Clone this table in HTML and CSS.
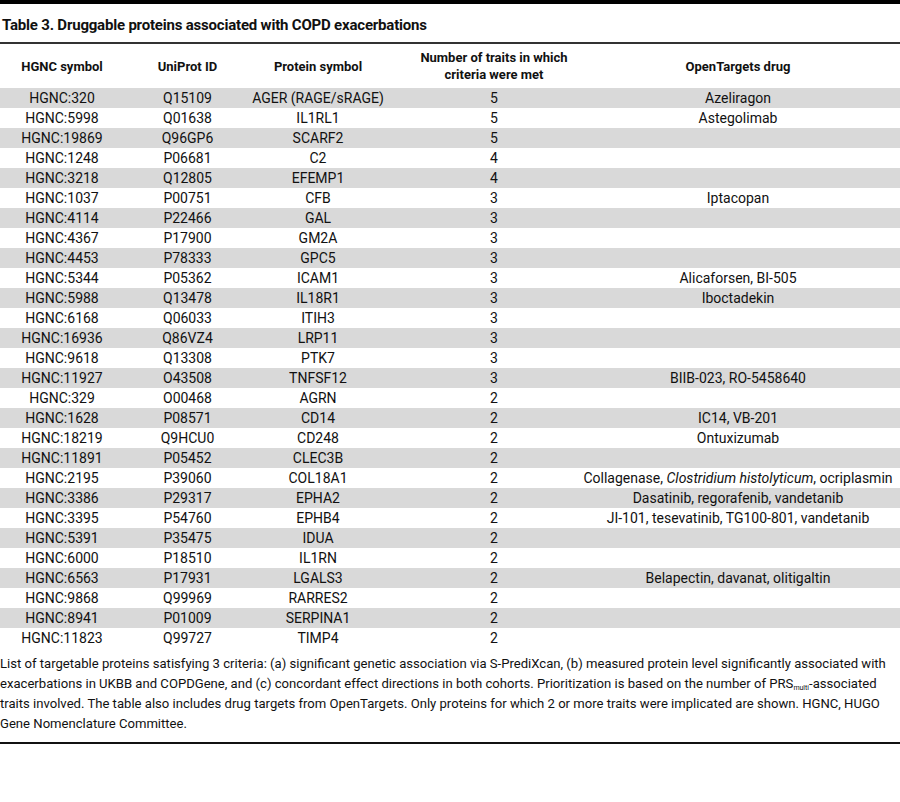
FILE: index.html
```html
<!DOCTYPE html>
<html lang="en">
  <head>
    <meta charset="UTF-8" />
    <meta name="viewport" content="width=device-width, initial-scale=1.0" />
    <title>Table 3</title>
    <link rel="stylesheet" href="styles.css">
  </head>
  <body>
    <div class="table-wrap">
      <h1 class="caption">Table 3. Druggable proteins associated with COPD exacerbations</h1>

      <table class="data">
        <thead>
          <tr>
            <th class="c1">HGNC symbol</th>
            <th class="c2">UniProt ID</th>
            <th class="c3">Protein symbol</th>
            <th class="c4">Number of traits in which<br>criteria were met</th>
            <th class="c5">OpenTargets drug</th>
          </tr>
        </thead>
        <tbody>
          <tr><td>HGNC:320</td><td>Q15109</td><td>AGER (RAGE/sRAGE)</td><td>5</td><td>Azeliragon</td></tr>
          <tr><td>HGNC:5998</td><td>Q01638</td><td>IL1RL1</td><td>5</td><td>Astegolimab</td></tr>
          <tr><td>HGNC:19869</td><td>Q96GP6</td><td>SCARF2</td><td>5</td><td></td></tr>
          <tr><td>HGNC:1248</td><td>P06681</td><td>C2</td><td>4</td><td></td></tr>
          <tr><td>HGNC:3218</td><td>Q12805</td><td>EFEMP1</td><td>4</td><td></td></tr>
          <tr><td>HGNC:1037</td><td>P00751</td><td>CFB</td><td>3</td><td>Iptacopan</td></tr>
          <tr><td>HGNC:4114</td><td>P22466</td><td>GAL</td><td>3</td><td></td></tr>
          <tr><td>HGNC:4367</td><td>P17900</td><td>GM2A</td><td>3</td><td></td></tr>
          <tr><td>HGNC:4453</td><td>P78333</td><td>GPC5</td><td>3</td><td></td></tr>
          <tr><td>HGNC:5344</td><td>P05362</td><td>ICAM1</td><td>3</td><td>Alicaforsen, BI-505</td></tr>
          <tr><td>HGNC:5988</td><td>Q13478</td><td>IL18R1</td><td>3</td><td>Iboctadekin</td></tr>
          <tr><td>HGNC:6168</td><td>Q06033</td><td>ITIH3</td><td>3</td><td></td></tr>
          <tr><td>HGNC:16936</td><td>Q86VZ4</td><td>LRP11</td><td>3</td><td></td></tr>
          <tr><td>HGNC:9618</td><td>Q13308</td><td>PTK7</td><td>3</td><td></td></tr>
          <tr><td>HGNC:11927</td><td>O43508</td><td>TNFSF12</td><td>3</td><td>BIIB-023, RO-5458640</td></tr>
          <tr><td>HGNC:329</td><td>O00468</td><td>AGRN</td><td>2</td><td></td></tr>
          <tr><td>HGNC:1628</td><td>P08571</td><td>CD14</td><td>2</td><td>IC14, VB-201</td></tr>
          <tr><td>HGNC:18219</td><td>Q9HCU0</td><td>CD248</td><td>2</td><td>Ontuxizumab</td></tr>
          <tr><td>HGNC:11891</td><td>P05452</td><td>CLEC3B</td><td>2</td><td></td></tr>
          <tr><td>HGNC:2195</td><td>P39060</td><td>COL18A1</td><td>2</td><td><span class="wide">Collagenase, <i>Clostridium histolyticum</i>, ocriplasmin</span></td></tr>
          <tr><td>HGNC:3386</td><td>P29317</td><td>EPHA2</td><td>2</td><td>Dasatinib, regorafenib, vandetanib</td></tr>
          <tr><td>HGNC:3395</td><td>P54760</td><td>EPHB4</td><td>2</td><td>JI-101, tesevatinib, TG100-801, vandetanib</td></tr>
          <tr><td>HGNC:5391</td><td>P35475</td><td>IDUA</td><td>2</td><td></td></tr>
          <tr><td>HGNC:6000</td><td>P18510</td><td>IL1RN</td><td>2</td><td></td></tr>
          <tr><td>HGNC:6563</td><td>P17931</td><td>LGALS3</td><td>2</td><td>Belapectin, davanat, olitigaltin</td></tr>
          <tr><td>HGNC:9868</td><td>Q99969</td><td>RARRES2</td><td>2</td><td></td></tr>
          <tr><td>HGNC:8941</td><td>P01009</td><td>SERPINA1</td><td>2</td><td></td></tr>
          <tr><td>HGNC:11823</td><td>Q99727</td><td>TIMP4</td><td>2</td><td></td></tr>
        </tbody>
      </table>

      <p class="footnote">List of targetable proteins satisfying 3 criteria: (a) significant genetic association via S-PrediXcan, (b) measured protein level significantly associated with exacerbations in UKBB and COPDGene, and (c) concordant effect directions in both cohorts. Prioritization is based on the number of PRS<sub>multi</sub>-associated traits involved. The table also includes drug targets from OpenTargets. Only proteins for which 2 or more traits were implicated are shown. HGNC, HUGO Gene Nomenclature Committee.</p>
    </div>
  </body>
</html>
```

FILE: styles.css
```css
body {
  margin: 0;
  font-family: Roboto, "Liberation Sans", sans-serif;
  color: #111;
  background: white;
}

* {
  margin: 0;
}

.table-wrap {
  width: 900px;
  border-top: 4px solid black;
}

.caption {
  font-size: 15px;
  font-weight: bold;
  letter-spacing: -0.2px;
  line-height: 20px;
  padding: 11px 0 7px 2px;
  border-bottom: 2px solid #333;
}

.data {
  width: 100%;
  border-collapse: collapse;
  table-layout: fixed;
  font-size: 14px;
}

.data th {
  font-size: 13px;
  font-weight: bold;
  line-height: 17px;
  height: 44px;
  padding: 0;
  text-align: center;
  vertical-align: middle;
}

.data th.c1 { width: 124px; }
.data th.c2 { width: 127px; }
.data th.c3 { width: 134px; }
.data th.c4 { width: 218px; }

.data th:last-child,
.data td:last-child {
  padding-right: 27px;
}

.data td {
  height: 20px;
  padding: 0;
  line-height: 20px;
  text-align: center;
  white-space: nowrap;
}

.data tbody tr:nth-child(odd) {
  background-color: #d9d9d9;
}

.wide {
  display: inline-block;
  margin: 0 -24px;
}

.footnote {
  font-size: 13.1px;
  line-height: 20px;
  padding: 6px 0 8px 0;
  border-bottom: 2px solid #111;
}

.footnote sub {
  font-size: 7px;
  line-height: 0;
  vertical-align: -2px;
}
```
